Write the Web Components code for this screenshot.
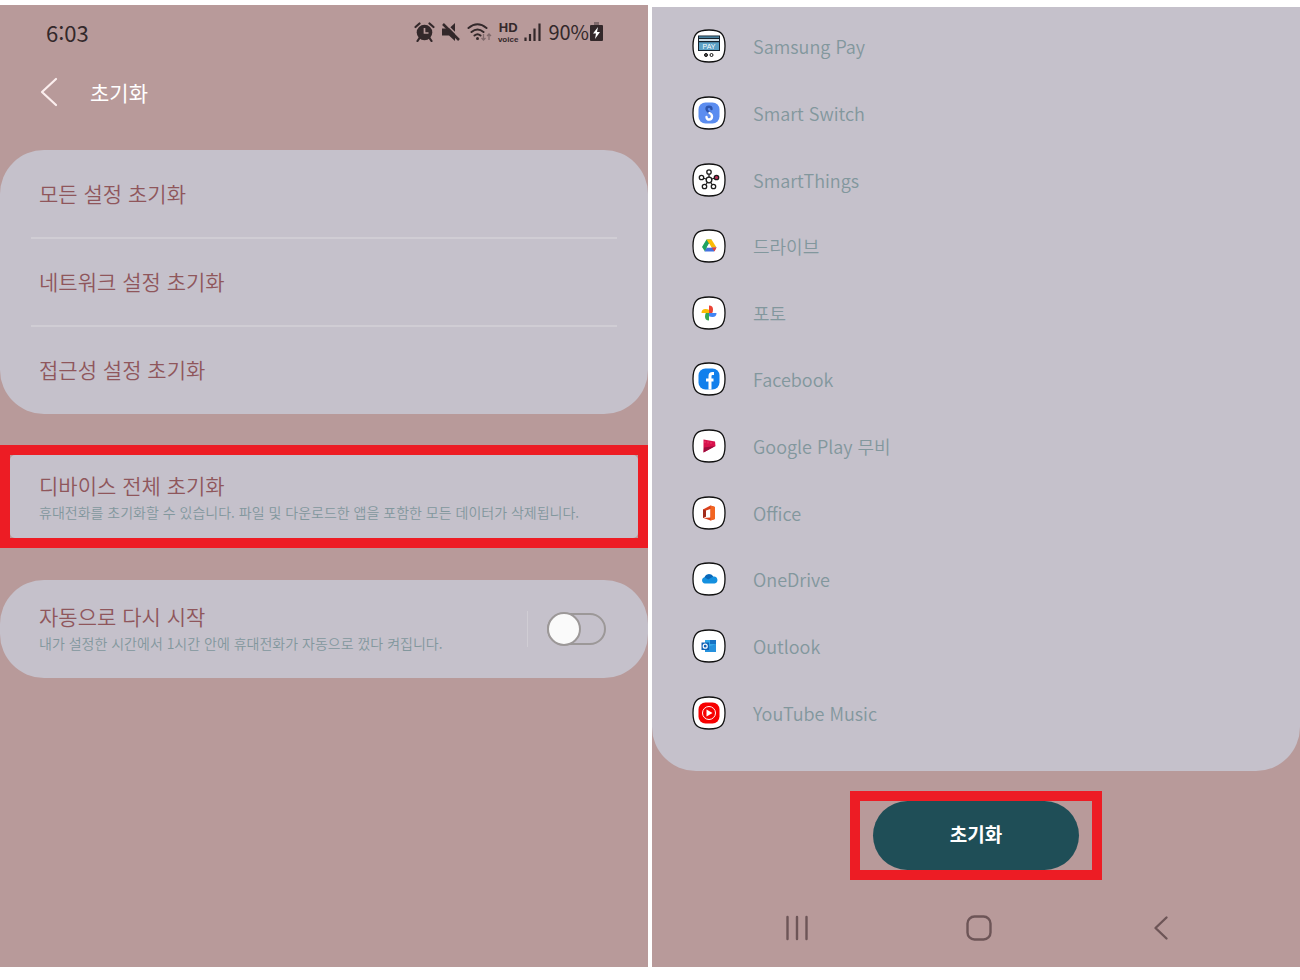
<!DOCTYPE html>
<html lang="ko">
<head>
<meta charset="utf-8">
<meta name="viewport" content="width=device-width, initial-scale=1">
<title>초기화</title>
<style>
body
{
    margin: 0;
    background: #fff;
    font-family: "Noto Sans CJK KR", "Noto Sans", sans-serif;
    font-weight: 350;
    --fondo: #b89a9a;
    --tarjeta: #c5c1cb;
    --titulo: #8f565b;
    --detalle: #82979d;
    --rojo: #ed1c24;
}
</style>
</head>
<body>

<screen-pair>
<phone-screen>
    <status-bar time="6:03" battery="90%"></status-bar>
    <title-bar>초기화</title-bar>
    <settings-card>
        <settings-item>모든 설정 초기화</settings-item>
        <settings-item>네트워크 설정 초기화</settings-item>
        <settings-item>접근성 설정 초기화</settings-item>
    </settings-card>
    <mark-box class="wide">
        <detail-item>디바이스 전체 초기화
            <span slot="detail">휴대전화를 초기화할 수 있습니다. 파일 및 다운로드한 앱을 포함한 모든 데이터가 삭제됩니다.</span>
        </detail-item>
    </mark-box>
    <settings-card>
        <switch-item>자동으로 다시 시작
            <span slot="detail">내가 설정한 시간에서 1시간 안에 휴대전화가 자동으로 껐다 켜집니다.</span>
        </switch-item>
    </settings-card>
</phone-screen>

<phone-screen class="second">
    <app-list>
        <app-row icon="pay">Samsung Pay</app-row>
        <app-row icon="switch">Smart Switch</app-row>
        <app-row icon="things">SmartThings</app-row>
        <app-row icon="drive">드라이브</app-row>
        <app-row icon="photos">포토</app-row>
        <app-row icon="facebook">Facebook</app-row>
        <app-row icon="movies">Google Play 무비</app-row>
        <app-row icon="office">Office</app-row>
        <app-row icon="onedrive">OneDrive</app-row>
        <app-row icon="outlook">Outlook</app-row>
        <app-row icon="ytmusic">YouTube Music</app-row>
    </app-list>
    <mark-box class="fit">
        <reset-button>초기화</reset-button>
    </mark-box>
    <nav-keys></nav-keys>
</phone-screen>
</screen-pair>

<script>
// estilos comunes a todos los componentes
const base = `
*{
    box-sizing: border-box;
    margin: 0;
    padding: 0;
}
button
{
    font: inherit;
    color: inherit;
    background: none;
    border: 0;
    text-align: left;
    cursor: pointer;
}
svg { display: block; }
`

class Base extends HTMLElement {
    constructor() {
        super();
        this.attachShadow({mode:"open"})
    }
    connectedCallback()
    {
        const template = document.createElement("template")
        template.innerHTML = `<style>${base}${this.css()}</style>${this.html()}`
        this.shadowRoot.replaceChildren(document.importNode(template.content, true))
    }
    css() { return "" }
    html() { return "<slot></slot>" }
}

class ScreenPair extends Base {
    css() { return `
:host
{
    display: grid;
    grid-template-columns: 1fr 1fr;
    gap: 4px;
    min-height: 100vh;
    box-sizing: border-box;
    padding: 5px 0 13px;
}
::slotted(.second) { margin-top: 2px; }
` }
}

class PhoneScreen extends Base {
    css() { return `
:host
{
    display: flex;
    flex-direction: column;
    min-width: 0;
    background: var(--fondo);
}
::slotted(.wide) { margin: 31px 0 32px; }
::slotted(.fit) { margin-top: 20px; align-self: center; }
` }
}

class StatusBar extends Base {
    css() { return `
:host
{
    display: flex;
    align-items: center;
    justify-content: space-between;
    height: 54px;
    padding: 0 44px 0 46px;
    color: #33282a;
    font-size: 22px;
    font-weight: 400;
    line-height: 24px;
}
.icons
{
    display: flex;
    align-items: center;
    gap: 6px;
}
.hd
{
    font: 700 13px/15px "Liberation Sans", sans-serif;
    text-align: center;
}
.hd small
{
    display: block;
    font-size: 8px;
    line-height: 9px;
}
.level
{
    display: flex;
    align-items: center;
    font-size: 20px;
}
` }
    html() { return `
<span>${this.getAttribute("time")}</span>
<div class="icons">
<svg width="21" height="20" viewBox="0 0 21 20"><circle cx="10.500" cy="10.500" r="7.800" fill="#33282a"/><path d="M10.500 6v5h4" fill="none" stroke="#b89a9a" stroke-width="1.700"/><path d="M1.500 5 5.500 1.500M19.500 5l-4-3.500M5.500 16l-2 3M15.500 16l2 3" stroke="#33282a" stroke-width="2.200" stroke-linecap="round"/></svg>
<svg width="20" height="20" viewBox="0 0 20 20"><path d="M1 6.500h7l6-5.500v18l-6-5.500H1z" fill="#33282a"/><path d="M4 1 20 17" stroke="#b89a9a" stroke-width="1.600"/><path d="M2 2 18 18" stroke="#33282a" stroke-width="2.500"/></svg>
<svg width="25" height="20" viewBox="0 0 25 20"><g fill="none" stroke="#33282a" stroke-width="2" stroke-linecap="round"><path d="M1.500 6q9-7.500 18 0M4.500 10q6-5 12 0M7.500 13.500q3-2.500 6 0"/></g><circle cx="10.500" cy="16.500" r="1.500" fill="#33282a"/><path d="M16.500 12v6m-2-2 2 2 2-2M22 18v-6m-2 2 2-2 2 2" fill="none" stroke="#806a6c" stroke-width="1.300"/></svg>
<div class="hd">HD<small>voice</small></div>
<svg width="18" height="20" viewBox="0 0 18 20"><path d="M1.500 15.500v3.500M6 12v7M10.500 6.500v12.500M15.500 1.500v17.500" stroke="#33282a" stroke-width="2.200"/></svg>
<div class="level">${this.getAttribute("battery")}
<svg width="15" height="20" viewBox="0 0 15 20"><path d="M5 0h5v3H5z" fill="#806a6c"/><rect x="1" y="3" width="13" height="16" rx="1" fill="#33282a"/><path d="M9 5 4 11.500h3L6 17l5-7H8z" fill="#fff"/></svg>
</div>
</div>` }
}

class TitleBar extends Base {
    css() { return `
:host
{
    display: flex;
    align-items: center;
    gap: 32px;
    height: 66px;
    margin-bottom: 25px;
    padding-left: 40px;
    color: #fff;
}
h1
{
    font-size: 21px;
    font-weight: 400;
    line-height: 28px;
}
` }
    html() { return `
<button type="button" aria-label="뒤로">
<svg width="18" height="30" viewBox="0 0 18 30"><path d="M16 2 2 15l14 13" fill="none" stroke="#fbeeee" stroke-width="2.200" stroke-linecap="round" stroke-linejoin="round"/></svg>
</button>
<h1><slot></slot></h1>` }
}

class SettingsCard extends Base {
    css() { return `
:host
{
    display: block;
    padding: 1px 31px;
    border-radius: 44px;
    background: var(--tarjeta);
}
` }
}

class SettingsItem extends Base {
    css() { return `
:host { display: block; }
:host(:not(:last-of-type)) { border-bottom: 2px solid #d0cdd4; }
button
{
    display: block;
    width: 100%;
    padding: 28px 8px 30px;
    color: var(--titulo);
    font-size: 21px;
    line-height: 28px;
}
` }
    html() { return `<button type="button"><slot></slot></button>` }
}

// texto de dos lineas, lo usan detail-item y switch-item
const dosLineas = `
.name
{
    display: block;
    color: var(--titulo);
    font-size: 21px;
    line-height: 28px;
}
.detail
{
    display: block;
    color: var(--detalle);
    font-size: 14px;
    line-height: 26px;
}
`

class DetailItem extends Base {
    css() { return dosLineas + `
:host
{
    display: block;
    border-radius: 5px;
    background: var(--tarjeta);
}
button
{
    display: block;
    width: 100%;
    padding: 16px 0 13px 29px;
}
` }
    html() { return `
<button type="button">
<span class="name"><slot></slot></span>
<span class="detail"><slot name="detail"></slot></span>
</button>` }
}

class SwitchItem extends Base {
    css() { return dosLineas + `
:host
{
    display: flex;
    align-items: center;
    justify-content: space-between;
    padding: 21px 11px 21px 8px;
}
.toggle
{
    display: flex;
    align-items: center;
    height: 36px;
    padding-left: 19px;
    border-left: 1px solid #d0cdd4;
}
input
{
    appearance: none;
    display: flex;
    align-items: center;
    width: 59px;
    height: 32px;
    border: 2px solid #9c9898;
    border-radius: 16px;
}
input::before
{
    content: "";
    flex: none;
    width: 34px;
    height: 34px;
    margin-left: -2px;
    border: 2px solid #9c9898;
    border-radius: 50%;
    background: #fafafa;
    box-sizing: border-box;
}
input:checked { background: #1f4e57; justify-content: flex-end; }
` }
    html() { return `
<label for="auto">
<span class="name"><slot></slot></span>
<span class="detail"><slot name="detail"></slot></span>
</label>
<div class="toggle"><input id="auto" type="checkbox" role="switch"></div>` }
}

class MarkBox extends Base {
    css() { return `
:host
{
    display: block;
    border: 10px solid var(--rojo);
}
` }
}

const iconos = {
    pay: `<rect x="6.500" y="7" width="21" height="14.500" fill="#5aa0c4" stroke="#16222c"/><path d="M6 9.500h22M6 12.500h22" stroke="#16222c" stroke-width="1.500"/><path d="M7 11h20" stroke="#fff" stroke-width="1.500"/><text x="17" y="20" text-anchor="middle" font-family="Liberation Sans, sans-serif" font-size="7" font-weight="400" fill="#fff">PAY</text><circle cx="14" cy="26" r="1.500" fill="#555" stroke="#111"/><circle cx="19.500" cy="26" r="1.500" fill="#fff" stroke="#111"/>`,
    switch: `<rect x="6.500" y="6.500" width="21" height="21" rx="7" fill="#5b8df0"/><path d="M19.500 13c0-3-5-3-5 0 0 2 2 3 3.500 4" fill="none" stroke="#2d55ad" stroke-width="2.400" stroke-linecap="round"/><path d="M17.500 17c2 1 2.500 2 2.500 3.500 0 4-5.500 4-5.500 0.500" fill="none" stroke="#fff" stroke-width="2.400" stroke-linecap="round"/>`,
    things: `<g fill="#fff" stroke="#1c1c1c" stroke-width="1.300"><path d="M17 17V9M17 17 9.500 14.500M17 17l7.500-2.500M17 17l-4.500 6.500M17 17l4.500 6.500"/><circle cx="17" cy="17" r="2.800"/><circle cx="17" cy="9" r="2.200"/><circle cx="9.500" cy="14.500" r="2.200"/><circle cx="12.500" cy="23.500" r="2.200"/><circle cx="21.500" cy="23.500" r="2.200"/><circle cx="24.500" cy="14.500" r="2.200" fill="#c0305a"/></g>`,
    drive: `<path d="M14.500 10.500h5L17 15l-4 7.500-3-4.500z" fill="#1ea362"/><path d="M14.500 10.500h5l5 8h-5z" fill="#fbbc04"/><path d="M12.500 22.500 15 18.500h9.500l-2.500 4z" fill="#4271e0"/><path d="M19.800 18.500h4.700l-2 4z" fill="#ea4335"/><path d="M17 14.500l-2.500 4h5z" fill="#fff"/>`,
    photos: `<path d="M17 9.500a4 4 0 0 1 4 4q0 2-.8 3.500H17z" fill="#ea4335"/><path d="M24.500 17a4 4 0 0 1-4 4q-2 0-3.500-.8V17z" fill="#4285f4"/><path d="M17 24.500a4 4 0 0 1-4-4q0-2 .8-3.500H17z" fill="#34a853"/><path d="M9.500 17a4 4 0 0 1 4-4q2 0 3.500.8V17z" fill="#fbbc04"/>`,
    facebook: `<rect x="6.500" y="6.500" width="21" height="21" rx="7" fill="#1280ec"/><path d="M22 11.500h-1.500q-2.500 0-2.500 2.500v13.500M14 18h7.500" fill="none" stroke="#fff" stroke-width="3"/>`,
    movies: `<path d="M11.500 10.500 23 12.500l.5 4.500-12 6.500z" fill="#d8104c"/><path d="M12 18.500 23.500 17l-12 6.500z" fill="#9b0b3c"/><path d="M13 12v2M16 12.500v2M19 13v2" stroke="#e83a6a"/>`,
    office: `<path d="M11 13.500 18.500 9.500 23 11v12l-4.500 1.500-7-2.500 7-.5V13l-4.500 1.500v6L11 22z" fill="#d8401c"/><path d="M18.500 9.500 23 11v12l-4.500 1.500z" fill="#f26522"/><path d="M11 13.500l3 1v6L11 22z" fill="#a02b1c"/>`,
    onedrive: `<path d="M13 21.500a3.200 3.200 0 0 1-.5-6.300 5 5 0 0 1 8.700-.7 3.500 3.500 0 0 1 1.300 7z" fill="#1490df"/><path d="M12.500 15.200a5 5 0 0 1 8.700-.7l-5 3z" fill="#0a67b8"/>`,
    outlook: `<rect x="13" y="11" width="11" height="12" fill="#35a8e8"/><path d="M18 11h6v4h-6z" fill="#1572c4"/><path d="M13 19l11-4v8H13z" fill="#2591dd"/><rect x="9.500" y="13.500" width="7.500" height="7.500" fill="#0f63b5"/><circle cx="13.200" cy="17.200" r="2" fill="none" stroke="#fff" stroke-width="1.200"/>`,
    ytmusic: `<rect x="6.500" y="6.500" width="21" height="21" rx="7" fill="#f70000"/><circle cx="17" cy="17" r="6.500" fill="none" stroke="#fff"/><path d="M14.500 13.500 20.500 17l-6 3.500z" fill="#fff"/>`
}

class AppList extends Base {
    css() { return `
:host
{
    display: block;
    padding: 6px 40px 25px;
    border-radius: 0 0 44px 44px;
    background: var(--tarjeta);
}
div
{
    display: grid;
    grid-auto-rows: 1fr;
    min-height: 733px;
}
` }
    html() { return `<div role="list"><slot></slot></div>` }
}

class AppRow extends Base {
    css() { return `
:host
{
    display: flex;
    align-items: center;
    gap: 27px;
    color: var(--detalle);
    font-size: 18px;
    line-height: 28px;
}
` }
    html() { return `
<svg width="34" height="34" viewBox="0 0 34 34" aria-hidden="true"><path d="M17 1C29 1 33 5 33 17S29 33 17 33 1 29 1 17 5 1 17 1z" fill="#fff" stroke="#111" stroke-width="1.300"/>${iconos[this.getAttribute("icon")]}</svg>
<span><slot></slot></span>` }
    connectedCallback()
    {
        super.connectedCallback()
        this.setAttribute("role", "listitem")
    }
}

class ResetButton extends Base {
    css() { return `
:host
{
    display: block;
    padding: 0 13px;
}
button
{
    display: block;
    min-width: 206px;
    padding: 18px 20px 22px;
    border-radius: 35px;
    background: #1f4e57;
    color: #fff;
    font-size: 19px;
    font-weight: 700;
    line-height: 29px;
    text-align: center;
}
` }
    html() { return `<button type="button"><slot></slot></button>` }
}

class NavKeys extends Base {
    css() { return `
:host { display: block; }
nav
{
    display: grid;
    grid-template-columns: 1fr 1fr 1fr;
    justify-items: center;
    padding: 34px 48px 24px 54px;
}
path, rect
{
    fill: none;
    stroke: #6d5557;
    stroke-width: 2.4;
    stroke-linecap: round;
    stroke-linejoin: round;
}
` }
    html() { return `
<nav>
<button type="button" aria-label="최근 앱"><svg width="28" height="28" viewBox="0 0 28 28"><path d="M4.500 3v22M14 3v22M23.500 3v22"/></svg></button>
<button type="button" aria-label="홈"><svg width="28" height="28" viewBox="0 0 28 28"><rect x="2.500" y="2.500" width="23" height="23" rx="7"/></svg></button>
<button type="button" aria-label="뒤로"><svg width="28" height="28" viewBox="0 0 28 28"><path d="M19.500 3.500 8.500 14l11 10.500"/></svg></button>
</nav>` }
}

window.customElements.define("screen-pair", ScreenPair);
window.customElements.define("phone-screen", PhoneScreen);
window.customElements.define("status-bar", StatusBar);
window.customElements.define("title-bar", TitleBar);
window.customElements.define("settings-card", SettingsCard);
window.customElements.define("settings-item", SettingsItem);
window.customElements.define("detail-item", DetailItem);
window.customElements.define("switch-item", SwitchItem);
window.customElements.define("mark-box", MarkBox);
window.customElements.define("app-list", AppList);
window.customElements.define("app-row", AppRow);
window.customElements.define("reset-button", ResetButton);
window.customElements.define("nav-keys", NavKeys);
</script>
</body>
</html>
